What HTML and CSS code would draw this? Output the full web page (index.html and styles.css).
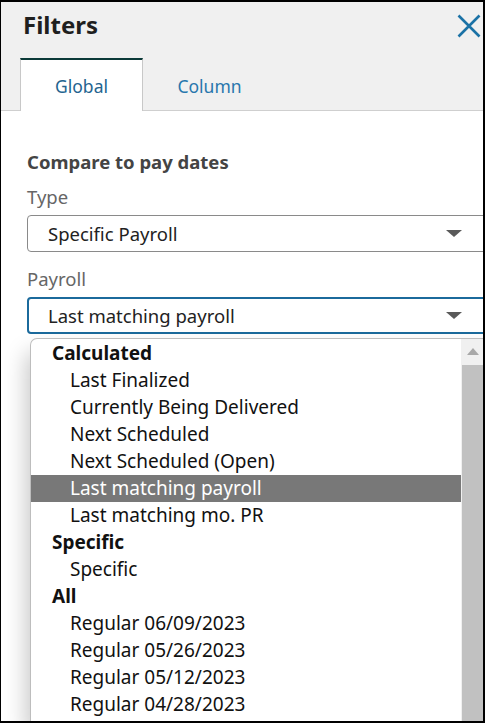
FILE: index.html
```html
<!DOCTYPE html>
<html>
<head>
<meta charset="utf-8">
<link rel="stylesheet" href="styles.css">
</head>
<body>
<div class="frame">
  <div class="header">
    <div class="title-row">
      <h1 class="title">Filters</h1>
      <svg class="close" width="24" height="24" viewBox="0 0 24 24"><path d="M1.5 1.5 L22.5 22.5 M22.5 1.5 L1.5 22.5" stroke="#1b72a6" stroke-width="2.6" fill="none"/></svg>
    </div>
    <div class="tabs">
      <div class="tab active">Global</div>
      <div class="tab">Column</div>
    </div>
  </div>
  <div class="content">
    <div class="section-title">Compare to pay dates</div>
    <div class="label first">Type</div>
    <div class="select">
      <span>Specific Payroll</span>
      <span class="caret"></span>
    </div>
    <div class="label">Payroll</div>
    <div class="select focused">
      <span>Last matching payroll</span>
      <span class="caret"></span>
    </div>
    <div class="dropdown">
      <div class="list">
        <div class="group">Calculated</div>
        <div class="item">Last Finalized</div>
        <div class="item">Currently Being Delivered</div>
        <div class="item">Next Scheduled</div>
        <div class="item">Next Scheduled (Open)</div>
        <div class="item selected">Last matching payroll</div>
        <div class="item">Last matching mo. PR</div>
        <div class="group">Specific</div>
        <div class="item">Specific</div>
        <div class="group">All</div>
        <div class="item">Regular 06/09/2023</div>
        <div class="item">Regular 05/26/2023</div>
        <div class="item">Regular 05/12/2023</div>
        <div class="item">Regular 04/28/2023</div>
      </div>
      <div class="scrollbar">
        <div class="arrow-up"></div>
        <div class="thumb"></div>
      </div>
    </div>
  </div>
</div>
</body>
</html>
```

FILE: styles.css
```css
html, body {
  margin: 0;
  padding: 0;
  background: #fff;
}
.frame {
  width: 485px;
  height: 723px;
  box-sizing: border-box;
  border: 2px solid #000;
  border-left-width: 1px;
  overflow: hidden;
  font-family: "Noto Sans", "Open Sans", sans-serif;
  background: #fff;
  display: flex;
  flex-direction: column;
}
.header {
  background: #f0f0f0;
  border-bottom: 1px solid #cfcfcf;
  height: 109px;
  box-sizing: border-box;
  display: flex;
  flex-direction: column;
}
.title-row {
  display: flex;
  justify-content: space-between;
  align-items: flex-start;
  padding: 7px 2px 0 22px;
  height: 40px;
  box-sizing: border-box;
}
.title {
  margin: 0;
  font-size: 24px;
  font-weight: 700;
  color: #1f1f1f;
  line-height: 32px;
}
.close {
  display: block;
  margin-top: 5px;
}
.tabs {
  display: flex;
  gap: 5px;
  padding-left: 19px;
  margin-top: 16px;
  flex: 1;
  margin-bottom: -1px;
}
.tab {
  width: 123px;
  box-sizing: border-box;
  display: flex;
  align-items: center;
  justify-content: center;
  font-size: 17.5px;
  color: #2877ad;
  padding-top: 2px;
}
.tab.active {
  background: #fff;
  border-top: 2px solid #0b3a38;
  border-left: 1px solid #c8c8c8;
  border-right: 1px solid #c8c8c8;
  color: #23648f;
  padding-top: 0;
}
.content {
  padding: 39px 0 0 26px;
  flex: 1;
  display: flex;
  flex-direction: column;
}
.section-title {
  font-size: 18.5px;
  font-weight: 700;
  color: #444;
  line-height: 24px;
}
.label {
  font-size: 18.5px;
  color: #666;
  line-height: 26px;
  margin-top: 14px;
  margin-bottom: 5px;
}
.label.first {
  margin-top: 10px;
}
.select {
  width: 462px;
  height: 37px;
  box-sizing: border-box;
  border: 1px solid #8a8a8a;
  border-radius: 4px;
  display: flex;
  align-items: center;
  justify-content: space-between;
  padding: 0 0 0 20px;
  font-size: 18.5px;
  color: #222;
}
.select.focused {
  border: 2px solid #1b6a9c;
  padding-left: 19px;
}
.caret {
  width: 0;
  height: 0;
  border-left: 8px solid transparent;
  border-right: 8px solid transparent;
  border-top: 7px solid #5a5a5a;
  margin-right: 26px;
}
.focused .caret {
  margin-right: 25px;
}
.dropdown {
  margin-top: 4px;
  margin-left: 3px;
  width: 470px;
  flex: 1;
  border: 1px solid #bdbdbd;
  border-bottom: none;
  border-radius: 7px 7px 0 0;
  display: flex;
  background: #fff;
  box-shadow: -4px 14px 22px rgba(0, 0, 0, 0.22);
  overflow: hidden;
}
.list {
  width: 430px;
  flex: none;
  padding-top: 1px;
}
.group, .item {
  height: 27px;
  line-height: 27px;
  font-size: 19px;
  color: #111;
  white-space: nowrap;
}
.group {
  font-weight: 700;
  padding-left: 21px;
}
.item {
  padding-left: 39px;
}
.item.selected {
  background: #787878;
  color: #fff;
}
.scrollbar {
  width: 23px;
  background: #f0f0f0;
  display: flex;
  flex-direction: column;
  align-items: center;
}
.arrow-up {
  width: 0;
  height: 0;
  border-left: 6px solid transparent;
  border-right: 6px solid transparent;
  border-bottom: 7px solid #a8a8a8;
  margin-top: 9px;
  margin-bottom: 10px;
}
.thumb {
  width: 22px;
  flex: 1;
  background: #c1c1c1;
}
```
